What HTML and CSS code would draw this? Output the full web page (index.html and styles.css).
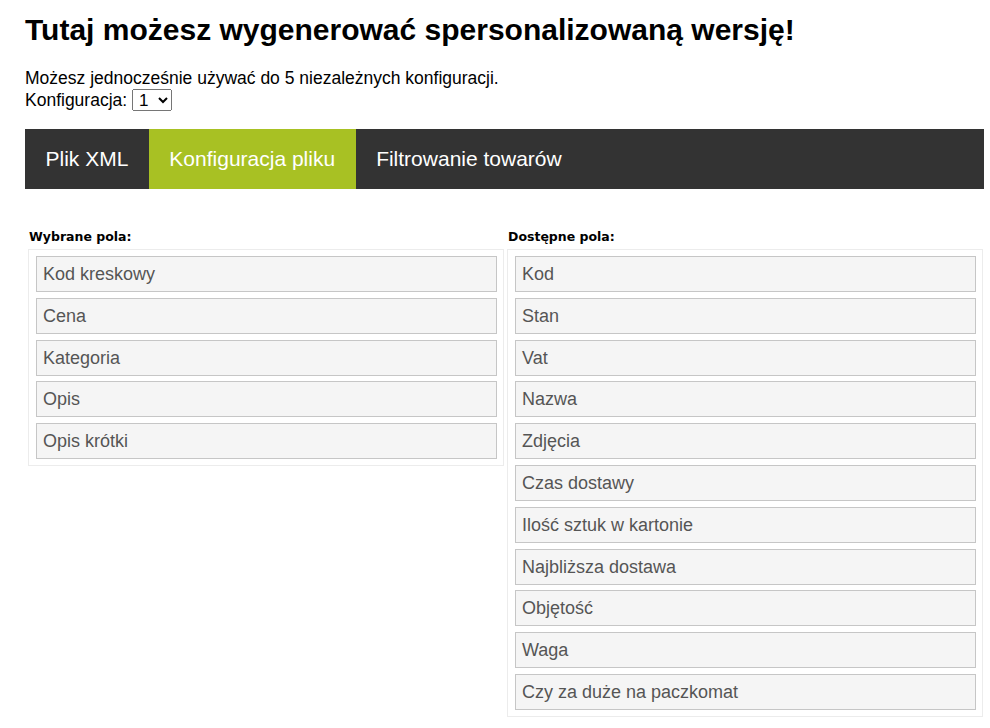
FILE: index.html
```html
<!DOCTYPE html>
<html lang="pl">
<head>
    <meta charset="UTF-8">
    <meta name="viewport" content="width=device-width, initial-scale=1.0">
    <title>Konfiguracja XML</title>
    <link rel="stylesheet" href="styles.css">
</head>
<body>
    <div class="page">
        <h1>Tutaj możesz wygenerować spersonalizowaną wersję!</h1>
        <p class="intro">
            Możesz jednocześnie używać do 5 niezależnych konfiguracji.<br>
            Konfiguracja:
            <select class="config-select">
                <option>1</option>
                <option>2</option>
                <option>3</option>
                <option>4</option>
                <option>5</option>
            </select>
        </p>

        <div class="tabs">
            <a href="#" class="tab">Plik XML</a>
            <a href="#" class="tab active">Konfiguracja pliku</a>
            <a href="#" class="tab">Filtrowanie towarów</a>
        </div>

        <div class="columns">
            <div class="column">
                <div class="list-label">Wybrane pola:</div>
                <ul class="field-list">
                    <li>Kod kreskowy</li>
                    <li>Cena</li>
                    <li>Kategoria</li>
                    <li>Opis</li>
                    <li>Opis krótki</li>
                </ul>
            </div>
            <div class="column">
                <div class="list-label">Dostępne pola:</div>
                <ul class="field-list">
                    <li>Kod</li>
                    <li>Stan</li>
                    <li>Vat</li>
                    <li>Nazwa</li>
                    <li>Zdjęcia</li>
                    <li>Czas dostawy</li>
                    <li>Ilość sztuk w kartonie</li>
                    <li>Najbliższa dostawa</li>
                    <li>Objętość</li>
                    <li>Waga</li>
                    <li>Czy za duże na paczkomat</li>
                </ul>
            </div>
        </div>
    </div>
</body>
</html>
```

FILE: styles.css
```css
body {
    font-family: "Liberation Sans", Arial, sans-serif;
    margin: 0;
    background-color: #fff;
    color: #000;
}
.page {
    padding: 13px 6px 0 25px;
}
h1 {
    font-size: 30px;
    font-weight: bold;
    margin: 0 0 21px 0;
}
.intro {
    font-size: 17.5px;
    margin: 0;
}
.config-select {
    font-family: inherit;
    font-size: 17px;
    width: 40px;
    height: 22px;
    padding: 0 2px;
}
.tabs {
    display: flex;
    background-color: #333;
    margin-top: 18px;
    height: 60px;
}
.tab {
    display: block;
    padding: 0 20.5px;
    line-height: 60px;
    font-size: 21px;
    color: #fff;
    text-decoration: none;
}
.tab.active {
    background-color: #a8c123;
}
.columns {
    display: flex;
    margin-top: 40px;
}
.column {
    flex: 1;
    padding: 0 1px 0 3px;
}
.column + .column {
    padding-left: 2px;
}
.list-label {
    font-family: "DejaVu Sans", sans-serif;
    font-size: 12.5px;
    font-weight: bold;
    margin: 0 0 5px 1px;
}
.field-list {
    list-style: none;
    margin: 0;
    border: 1px solid #ececec;
    padding: 6px 6px 0 7px;
}
.field-list li {
    background-color: #f5f5f5;
    border: 1px solid #c6c6c6;
    height: 34px;
    line-height: 34px;
    padding: 0 6px;
    margin-bottom: 5.8px;
    font-size: 18px;
    color: #555;
}
```
